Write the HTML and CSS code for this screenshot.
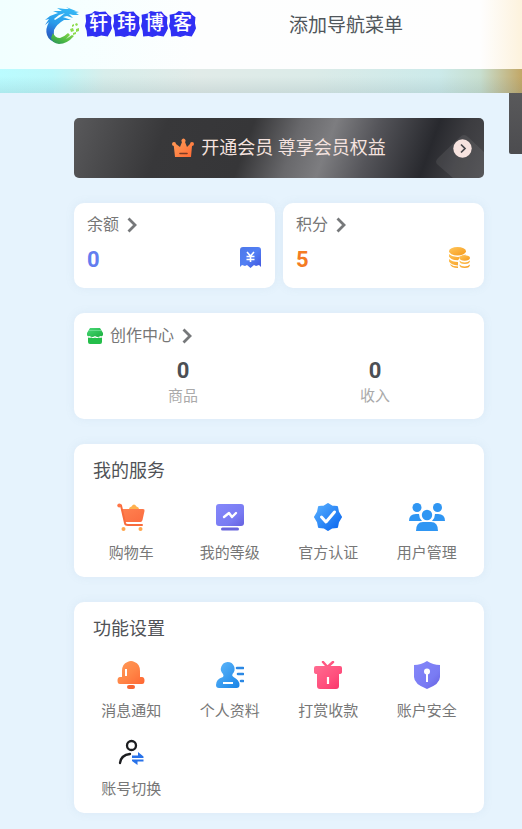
FILE: index.html
```html
<!DOCTYPE html>
<html lang="zh-CN">
<head>
<meta charset="utf-8">
<meta name="viewport" content="width=device-width, initial-scale=1">
<title>轩玮博客</title>
<link rel="stylesheet" href="styles.css">
</head>
<body>
<svg class="defs" aria-hidden="true">
  <defs>
    <linearGradient id="orange" x1="0" y1="0" x2="1" y2="1"><stop offset="0" stop-color="#ff9a58"/><stop offset=".5" stop-color="#ff8748"/><stop offset="1" stop-color="#ff6632"/></linearGradient>
    <linearGradient id="coral" x1="0" y1="0" x2="1" y2="1"><stop offset="0" stop-color="#ff8150"/><stop offset="1" stop-color="#fb6c40"/></linearGradient>
    <linearGradient id="violet" x1="0" y1="0" x2="1" y2="1"><stop offset="0" stop-color="#8588fa"/><stop offset=".65" stop-color="#797bf3"/><stop offset="1" stop-color="#6560df"/></linearGradient>
    <linearGradient id="blue" x1="0" y1="0" x2="1" y2="1"><stop offset="0" stop-color="#58b0ff"/><stop offset="1" stop-color="#0864ee"/></linearGradient>
    <linearGradient id="sky" x1="0" y1="0" x2="1" y2="1"><stop offset="0" stop-color="#62b9fb"/><stop offset="1" stop-color="#1783e6"/></linearGradient>
    <linearGradient id="pink" x1="0" y1="0" x2="1" y2="1"><stop offset="0" stop-color="#ff6c91"/><stop offset=".6" stop-color="#ff4e7c"/><stop offset="1" stop-color="#f83268"/></linearGradient>
    <linearGradient id="indigo" x1="0" y1="0" x2="1" y2="1"><stop offset="0" stop-color="#4d78e9"/><stop offset=".5" stop-color="#527ff4"/><stop offset="1" stop-color="#4255de"/></linearGradient>
    <linearGradient id="gold" x1="0" y1="0" x2="1" y2="1"><stop offset="0" stop-color="#ffc65c"/><stop offset="1" stop-color="#f59a1c"/></linearGradient>
    <linearGradient id="green" x1="0" y1="0" x2="1" y2="1"><stop offset="0" stop-color="#49d877"/><stop offset="1" stop-color="#1baf3e"/></linearGradient>
    <linearGradient id="dragon" x1=".6" y1="0" x2=".3" y2="1"><stop offset="0" stop-color="#35b8f5"/><stop offset=".5" stop-color="#2a9bea"/><stop offset=".8" stop-color="#2a66cf"/><stop offset="1" stop-color="#2467a8"/></linearGradient>
    <linearGradient id="leaf" x1="0" y1="1" x2="1" y2="0"><stop offset="0" stop-color="#258a60"/><stop offset=".4" stop-color="#48b745"/><stop offset="1" stop-color="#8fdc49"/></linearGradient>
  </defs>
</svg>

<header class="topbar">
  <a class="logo" href="#">
    <svg class="logo-mark" viewBox="0 0 36 38" aria-hidden="true">
      <path fill="url(#dragon)" d="M8 4 17 4 12 1 20 2 24 2 21 0 31 4 29 4 34 5 31 6 34 8 28 8 24 7 28 11 22 9 18 10 26 13 19 13Q12 17 9 23 8 29 12 36 4 34 2 28 0 22 4 15L0 18 4 12 0 13 5 9 13 6Z"/>
      <path fill="#f4ffff" d="m9 12 5-4 6-2-5 4-5 3Z"/>
      <path fill="url(#leaf)" d="M8 26q2 5 7 5 4-1 8-5l2 2-4 4 6-4 2 1Q22 37 14 37 7 36 6 31Z"/>
      <path fill="#8ddc4c" d="m25 22 3-1 1 3-3 1Zm5-5 2-1 1 2-2 1Zm1 5 3-1v3l-3 1Zm-4-4 2-1v2l-2 1Zm1 8 3-1v2l-3 1Z"/>
    </svg>
    <span class="logo-text"><span>轩</span><span>玮</span><span>博</span><span>客</span></span>
  </a>
  <nav class="nav"><a href="#">添加导航菜单</a></nav>
</header>
<div class="cover"></div>
<aside class="side-panel"></aside>

<main class="content">
  <a class="vip" href="#">
    <svg class="vip-shape" viewBox="0 0 50 44" aria-hidden="true"><path fill="#fff" fill-opacity=".08" d="M4 24 26 3q4-4 8 0l16 15v26H19L4 31q-4-3 0-7Z"/></svg>
    <svg class="crown" viewBox="0 0 22 20" aria-hidden="true"><path fill="url(#orange)" d="M3 19 1.800 8A2 2 0 1 1 4 6l4 3 2-5a2 2 0 1 1 3 0l2 5 3-3a2 2 0 1 1 2 2l-1 11Z"/><path stroke="#7d3b24" stroke-width="1.600" stroke-linecap="round" d="M8 15.500h7"/></svg>
    <span>开通会员 尊享会员权益</span>
    <svg class="vip-arrow" viewBox="0 0 19 19" aria-hidden="true"><circle cx="9.500" cy="9.500" r="9.200" fill="#f7e3df"/><path d="m8 5.500 4 4-4 4" fill="none" stroke="#46464a" stroke-width="1.700"/></svg>
  </a>

  <div class="wallet">
    <a class="card asset" href="#">
      <span class="card-link">余额<svg class="chevron" viewBox="0 0 10 16" aria-hidden="true"><path d="m1.500 1.500 6.500 6.500-6.500 6.500"/></svg></span>
      <span class="asset-row"><b class="num num-blue">0</b>
        <svg class="asset-icon" viewBox="0 0 21 21" aria-hidden="true"><path fill="url(#indigo)" d="M3 0h15q3 0 3 3v17l-2-2-3 1-2-1-3.500 3L7 18l-2 1-3-1-2 2V3Q0 0 3 0Z"/><path d="m7 5 3.500 4L14 5M10.500 9v6M6.500 9.500h8M6.500 12.500h8" fill="none" stroke="#fff" stroke-width="1.600"/></svg>
      </span>
    </a>
    <a class="card asset" href="#">
      <span class="card-link">积分<svg class="chevron" viewBox="0 0 10 16" aria-hidden="true"><path d="m1.500 1.500 6.500 6.500-6.500 6.500"/></svg></span>
      <span class="asset-row"><b class="num num-orange">5</b>
        <svg class="asset-icon" viewBox="0 0 21 21" aria-hidden="true"><g fill="url(#gold)"><ellipse cx="8.500" cy="4.200" rx="8.500" ry="4.200"/><path d="M0 7q3 3 8.500 3Q14 10 17 7q-1 1-5 2-3 1-3 4-7 0-9-4ZM0 12q3 3 9 3v3.500q-7-.5-9-4ZM1 17q3 2.500 8 2.500V21Q2 21 1 17Z"/><path d="M0 7.500q3 2.500 8.500 2.500 5.500 0 8.500-2.500L16 9q-5-1-6 3l-1 1.200q-7 0-9-3.700Z"/><ellipse cx="15.700" cy="11" rx="5.300" ry="2.700"/><path d="M10.400 13.500q2 2 5.300 2t5.300-2q0 3.500-5.300 3.500t-5.300-3.500Zm0 4q2 2 5.300 2t5.300-2q0 3.500-5.300 3.500t-5.300-3.500Z"/></g></svg>
      </span>
    </a>
  </div>

  <section class="card creator">
    <a class="card-link" href="#">
      <svg class="shop" viewBox="0 0 16 16" aria-hidden="true"><path fill="url(#green)" d="M3 0h10l3 5v2q-1 2-2.700 1Q11 10 8 8 5 10 2.700 8 .5 9 0 7V5Z"/><path fill="#24be4a" d="M1 9.500q2 .5 3.500 0 1.500 1 3.500 0 2 1 3.500 0 1.500.5 3.500 0V14q0 2-2 2H3q-2 0-2-2Z"/><path d="M2 2.500h12" stroke="#72e095" stroke-width=".8"/></svg>
      创作中心<svg class="chevron" viewBox="0 0 10 16" aria-hidden="true"><path d="m1.500 1.500 6.500 6.500-6.500 6.500"/></svg>
    </a>
    <div class="stats">
      <div class="stat"><b class="num">0</b><span>商品</span></div>
      <div class="stat"><b class="num">0</b><span>收入</span></div>
    </div>
  </section>

  <section class="card menu">
    <h2>我的服务</h2>
    <div class="menu-grid">
      <a href="#"><svg viewBox="0 0 28 28" aria-hidden="true"><path fill="#ffb14e" d="M12 6q0-2 2.500-2.500Q17-.5 19.500 3.500 22 4 22 6Z"/><path fill="url(#coral)" d="M5 6h21q2 0 1.500 2l-2 9q-.5 2-2 2H8Z"/><path d="M2 2.500h2L8 20q0 2 3 2h14" fill="none" stroke="#f86b3c" stroke-width="2" stroke-linecap="round"/><circle cx="2.300" cy="2.500" r="2" fill="#ff7546"/><circle cx="6.500" cy="26" r="2" fill="#ffa64d"/><circle cx="23.500" cy="26" r="2" fill="#ffa64d"/></svg>购物车</a>
      <a href="#"><svg viewBox="0 0 28 28" aria-hidden="true"><rect y="1" width="28" height="22" rx="3" fill="url(#violet)"/><rect x="5" y="24.500" width="18" height="3" rx="1.500" fill="#6965dc"/><path d="m8 14 5-4 3 4 4-4" fill="none" stroke="#fff" stroke-width="2.400" stroke-linecap="round" stroke-linejoin="round"/></svg>我的等级</a>
      <a href="#"><svg viewBox="0 0 28 28" aria-hidden="true"><path fill="url(#blue)" stroke="url(#blue)" stroke-width="2" stroke-linejoin="round" d="m14 1 4 2.500 5 .5 1 5 3 5-3 5-1 5-5 .5-4 2.500-4-2.500-5-.5-1-5-3-5 3-5 1-5 5-.5Z"/><path d="m7.500 14 4.500 5L20.500 9" fill="none" stroke="#fff" stroke-width="3" stroke-linecap="round" stroke-linejoin="round"/></svg>官方认证</a>
      <a href="#"><svg class="wide" viewBox="0 0 36 28" aria-hidden="true"><g fill="#2f96f3"><circle cx="8" cy="4.500" r="4.500"/><circle cx="28.500" cy="4.500" r="4.500"/><path d="M0 18q0-7 7-7h3q0 4 3 7Zm23 0q3-3 3-7h3q7 0 7 7Z"/><circle cx="18" cy="12" r="5.200"/><path d="M7 28q0-9 7-9h8q7 0 7 9Z"/></g></svg>用户管理</a>
    </div>
  </section>

  <section class="card menu">
    <h2>功能设置</h2>
    <div class="menu-grid">
      <a href="#"><svg viewBox="0 0 28 28" aria-hidden="true"><path fill="url(#orange)" d="M10.500 1q3.500-2 7 0Q23 3 23 10v6h2q2.500 0 2.500 3.500T25 23H3Q.5 23 .5 19.500T3 16h2v-6q0-7 5.500-9Z"/><rect x="10" y="24" width="8" height="4" rx="2" fill="#f76634"/><path d="M9 8v7" stroke="#fff" stroke-width="2"/></svg>消息通知</a>
      <a href="#"><svg viewBox="0 0 28 28" aria-hidden="true"><path fill="url(#sky)" d="M11.500 1a7 7 0 0 1 5 12q-1 2 1 3 6 3 6 8 0 3-3 3H3q-3 0-3-3 0-6 7-8 1-1 0-3a7 7 0 0 1 4.500-12Z"/><path d="M7 22h10" stroke="#fff" stroke-width="2"/><path d="M21 7h6m-5 6h5m-2 7h2" stroke="#2b88e4" stroke-width="2.600" stroke-linecap="round"/></svg>个人资料</a>
      <a href="#"><svg viewBox="0 0 28 28" aria-hidden="true"><path d="m9 1 4.500 5L19 1" fill="none" stroke="#ff5782" stroke-width="2.500" stroke-linecap="round"/><path fill="url(#pink)" d="M2 5h24q2 0 2 2v4q0 2-3 2v12q0 3-3 3H6q-3 0-3-3V13q-3 0-3-2V7q0-2 2-2Z"/><path d="M14 16v7" stroke="#fff" stroke-width="2.200"/></svg>打赏收款</a>
      <a href="#"><svg viewBox="0 0 28 28" aria-hidden="true"><path fill="url(#violet)" d="M14 0q6 4 13 4v12q0 7-13 12Q1 23 1 16V4q7 0 13-4Z"/><circle cx="14" cy="10.500" r="3" fill="#fff"/><path d="M14 11v10" stroke="#fff" stroke-width="2"/></svg>账户安全</a>
      <a href="#"><svg viewBox="0 0 28 28" aria-hidden="true"><g fill="none" stroke="#1c1d20" stroke-width="2.300" stroke-linecap="round"><circle cx="14.500" cy="6.500" r="4.500"/><path d="M3 24q1-8 10-9"/></g><path fill="#2872e9" d="M15 16.500h6V13l5.500 4.500V19H15Zm11.500 6h-6V26L15 22v-1.500h11.500Z"/></svg>账号切换</a>
    </div>
  </section>
</main>
</body>
</html>
```

FILE: styles.css
```css
* { box-sizing: border-box; }

body {
  position: relative;
  margin: 0;
  background: #e6f3fd;
  color: #777;
  font-family: Roboto, "Noto Sans CJK SC", sans-serif;
  font-size: 15px;
  line-height: 22px;
}

a { color: inherit; text-decoration: none; }
svg { display: block; flex: none; }
.defs { position: absolute; width: 0; height: 0; }

.topbar {
  display: flex;
  align-items: center;
  gap: 93px;
  padding: 7px 16px 24px 45px;
  background: linear-gradient(90deg, #f1ffff 0, #f5ffff 14%, #fdfefe 38%, #fefefe 92%, #fdf2dd 100%);
}

.logo { display: flex; align-items: center; gap: 4px; }
.logo-mark { width: 36px; height: 38px; }
.logo-text {
  display: flex;
  gap: 1px;
  margin-bottom: 4px;
  color: #fff;
  font-size: 19px;
  font-weight: 500;
  line-height: 26px;
}
.logo-text span {
  width: 27px;
  text-align: center;
  background: #3030f4;
  clip-path: polygon(2% 14%, 24% 10%, 36% 0, 54% 4%, 76% 2%, 86% 14%, 98% 24%, 96% 46%, 100% 66%, 94% 80%, 84% 98%, 60% 94%, 42% 100%, 28% 96%, 8% 98%, 6% 76%, 0 58%, 4% 40%);
}

.nav { color: #50565b; font-size: 19px; }

.cover {
  height: 24px;
  background:
    linear-gradient(180deg, transparent 30%, rgba(90, 120, 130, .14)),
    linear-gradient(90deg, #bafcff 0, #bdf8fa 10%, #d8eeeb 20%, #e1ebe8 38%, #dbebe8 60%, #cceaea 84%, #c8dfd0 92%, #c2a766 100%);
}

.side-panel {
  position: absolute;
  top: 93px;
  right: 0;
  width: 13px;
  height: 61px;
  border-radius: 0 0 0 2px;
  background: linear-gradient(#59595b, #4c4c4f);
}

.content {
  display: flex;
  flex-direction: column;
  gap: 25px;
  padding: 25px 38px 16px 74px;
}

.vip {
  position: relative;
  display: flex;
  align-items: center;
  justify-content: center;
  gap: 7px;
  height: 60px;
  border-radius: 5px;
  overflow: hidden;
  color: #f4e2df;
  font-size: 18px;
  background: linear-gradient(110deg, #59595b 0, #38383a 22%, #363638 42%, #68686b 53%, #7d7d80 61%, #55555a 71%, #28292e 85%, #3c3c40 92%, #48484b 100%);
}
.vip-shape {
  position: absolute;
  right: 0;
  bottom: 0;
  width: 50px;
  height: 44px;
}
.crown { width: 22px; height: 20px; }
.vip-arrow {
  position: absolute;
  right: 12px;
  width: 19px;
  height: 19px;
}

.card {
  border-radius: 10px;
  background: #fff;
  box-shadow: 0 0 10px rgba(116, 146, 175, .1);
}
.card-link { display: flex; align-items: center; font-size: 16px; }
.chevron { width: 10px; height: 16px; margin-left: 8px; }
.chevron path { fill: none; stroke: #76787a; stroke-width: 2.8; }

.wallet { display: grid; grid-template-columns: 1fr 1fr; gap: 8px; }
.asset { padding: 11px 14px 14px 13px; }
.asset-row {
  display: flex;
  align-items: center;
  justify-content: space-between;
  margin-top: 10px;
  line-height: 28px;
}
.asset-icon { width: 21px; height: 21px; margin-bottom: 6px; }

.num { color: #4c4f54; font-size: 22px; font-weight: 700; }
.num-blue { color: #637def; }
.num-orange { color: #f47b23; }

.creator { padding: 12px 13px; }
.shop { width: 16px; height: 16px; margin-right: 7px; }
.stats { display: grid; grid-template-columns: 1fr 1fr; margin-top: 10px; }
.stat {
  display: flex;
  flex-direction: column;
  align-items: center;
  color: #aaa;
}
.stat .num { line-height: 28px; }

.menu { padding: 15px 8px 13px; }
.menu h2 {
  margin: 0 0 20px 11px;
  color: #505256;
  font-size: 18px;
  font-weight: 400;
  line-height: 24px;
}
.menu-grid { display: grid; grid-template-columns: repeat(4, 1fr); row-gap: 17px; }
.menu-grid a {
  display: flex;
  flex-direction: column;
  align-items: center;
  gap: 11px;
}
.menu-grid svg { width: 28px; height: 28px; }
.menu-grid .wide { width: 36px; }
```
